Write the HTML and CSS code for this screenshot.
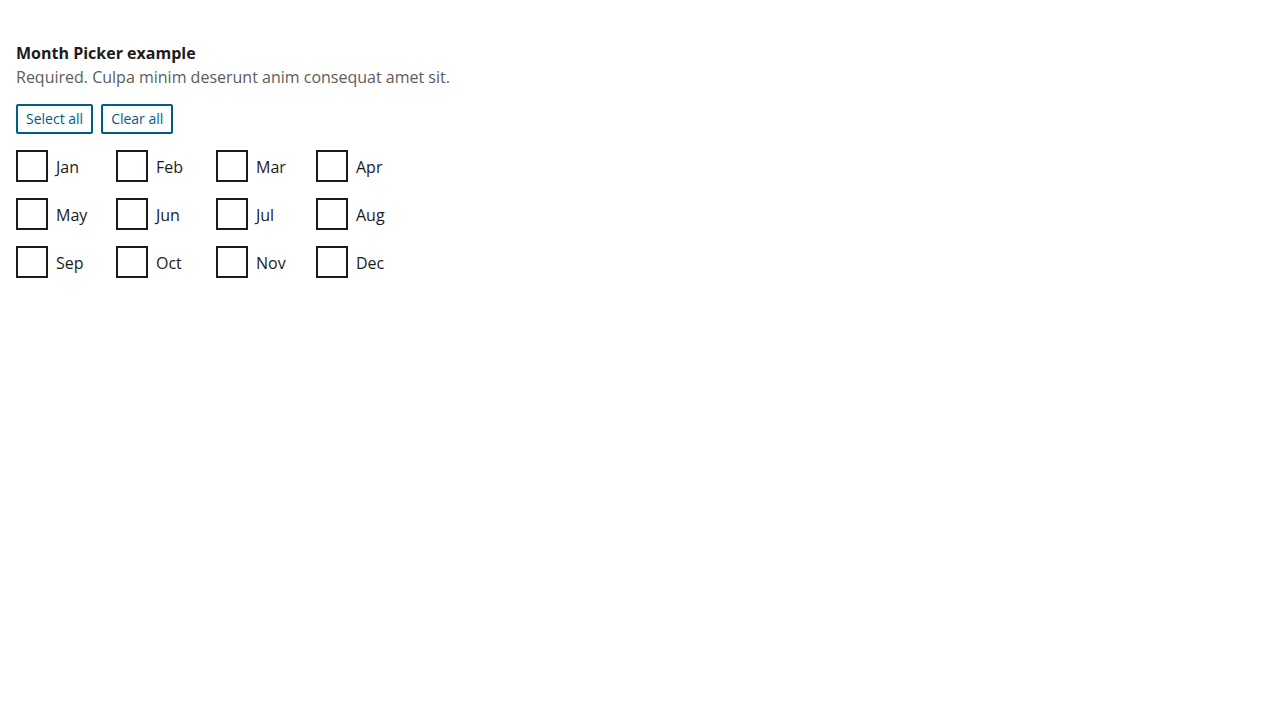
FILE: index.html
```html
<!DOCTYPE html>
<html lang="en">
<head>
<meta charset="utf-8">
<title>Month Picker example</title>
<link rel="stylesheet" href="styles.css">
</head>
<body>
<main class="page">
  <fieldset class="picker">
    <legend class="picker-title">Month Picker example</legend>
    <p class="picker-hint">Required. Culpa minim deserunt anim consequat amet sit.</p>
    <div class="actions">
      <button type="button" class="btn">Select all</button>
      <button type="button" class="btn">Clear all</button>
    </div>
    <div class="months">
      <label class="month"><input type="checkbox" class="box"><span>Jan</span></label>
      <label class="month"><input type="checkbox" class="box"><span>Feb</span></label>
      <label class="month"><input type="checkbox" class="box"><span>Mar</span></label>
      <label class="month"><input type="checkbox" class="box"><span>Apr</span></label>
      <label class="month"><input type="checkbox" class="box"><span>May</span></label>
      <label class="month"><input type="checkbox" class="box"><span>Jun</span></label>
      <label class="month"><input type="checkbox" class="box"><span>Jul</span></label>
      <label class="month"><input type="checkbox" class="box"><span>Aug</span></label>
      <label class="month"><input type="checkbox" class="box"><span>Sep</span></label>
      <label class="month"><input type="checkbox" class="box"><span>Oct</span></label>
      <label class="month"><input type="checkbox" class="box"><span>Nov</span></label>
      <label class="month"><input type="checkbox" class="box"><span>Dec</span></label>
    </div>
  </fieldset>
</main>
</body>
</html>
```
FILE: styles.css
```css
* { box-sizing: border-box; }
html, body { margin: 0; padding: 0; background: #fff; }
body {
  font-family: "Open Sans", "Noto Sans", sans-serif;
  font-size: 16px;
  line-height: 24px;
  color: #1b1b1b;
}
.page { padding: 41px 16px 16px; }
.picker { border: 0; margin: 0; padding: 0; min-width: 0; }
.picker-title {
  padding: 0;
  font-weight: 700;
  color: #1b1b1b;
  float: left;
  width: 100%;
}
.picker-hint {
  clear: both;
  margin: 0;
  color: #5c5c5c;
}
.actions {
  display: flex;
  gap: 8px;
  margin-top: 15px;
}
.btn {
  font-family: inherit;
  font-size: 14px;
  line-height: 20px;
  height: 30px;
  padding: 0 8px;
  background: #fff;
  color: #005e85;
  border: 2px solid #005e85;
  border-radius: 2px;
  cursor: pointer;
}
.months {
  display: grid;
  grid-template-columns: repeat(4, 100px);
  row-gap: 16px;
  margin-top: 16px;
}
.month {
  display: flex;
  align-items: center;
  gap: 8px;
  height: 32px;
}
.month span { padding-top: 2px; }
.box {
  appearance: none;
  -webkit-appearance: none;
  margin: 0;
  width: 32px;
  height: 32px;
  border: 2px solid #1b1b1b;
  border-radius: 0;
  background: #fff;
  flex: none;
}
```
